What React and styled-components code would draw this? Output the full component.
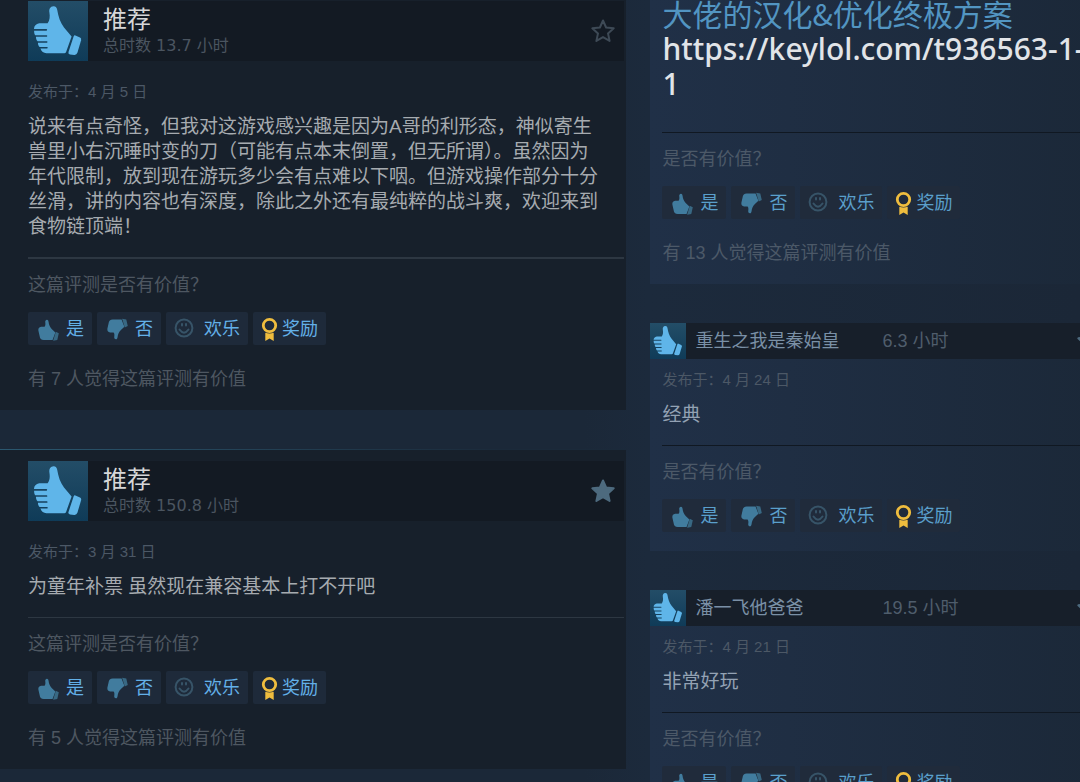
import React from 'react';
import styled, { createGlobalStyle } from 'styled-components';

const GlobalStyle = createGlobalStyle`
  * {
    box-sizing: border-box;
  }
  body {
    margin: 0;
    background: #1b2838;
    overflow: hidden;
    font-family: 'Liberation Sans', 'Noto Sans CJK SC', sans-serif;
  }
  h1, h2, p {
    margin: 0;
    font-weight: 400;
  }
`;

const Page = styled.main`
  display: flex;
  align-items: flex-start;
  gap: 24px;
  height: 100vh;
  overflow: hidden;
  background: linear-gradient(90deg, #1b2838 0%, #1b2838 54%, #1c2a3c 60%, #1b2737 100%);
`;

const MainColumn = styled.div`
  flex: 0 0 58%;
  display: flex;
  flex-direction: column;
  gap: 39px;
`;

const SideColumn = styled.div`
  flex: 1 0 460px;
  display: flex;
  flex-direction: column;
  gap: 39px;
`;

const MainCard = styled.article`
  padding: ${(props) => (props.$scrolled ? '1px' : '11px')} 2px 19px 28px;
  background: #17202b;
  border-top: ${(props) => (props.$scrolled ? '0' : '1px')} solid;
  border-image: linear-gradient(90deg, #2b5870, #1b2a3a 80%) 1;
`;

const MainHeader = styled.header`
  display: flex;
  align-items: center;
  height: 60px;
  padding-right: 9px;
  background: #131a23;
`;

const HeaderText = styled.div`
  flex: 1;
  padding-left: 15px;
`;

const Verdict = styled.h2`
  font-size: 24px;
  line-height: 30px;
  color: #d6d7d8;
`;

const TotalHours = styled.p`
  font-family: 'DejaVu Sans', 'Noto Sans CJK SC', sans-serif;
  font-size: 16px;
  line-height: 22px;
  color: #4b5560;
`;

const ThumbTile = styled.span`
  flex: none;
  display: block;
  width: ${(props) => props.$size}px;
  height: ${(props) => props.$size}px;
  background: linear-gradient(#234d67, #0f3b58);
  color: #5fb5e9;

  svg {
    display: block;
    width: 100%;
    height: 100%;
  }
`;

const StarButton = styled.button`
  display: flex;
  padding: 0;
  border: 0;
  background: none;
  color: ${(props) => (props.$filled ? '#4d6a7e' : '#3e4a56')};
`;

const Posted = styled.p`
  margin-top: ${(props) => (props.$compact ? 11 : 21)}px;
  font-size: 15px;
  line-height: 20px;
  color: #4c5866;
`;

const Body = styled.p`
  margin-top: 12px;
  padding-right: 20px;
  font-size: 19px;
  line-height: 25px;
  color: ${(props) => (props.$side ? '#93a2b4' : '#a6abb0')};
`;

const Divider = styled.hr`
  height: ${(props) => (props.$thick ? 2 : 1)}px;
  margin: 18px 0 14px;
  border: 0;
  background: ${(props) => (props.$side ? '#101822' : '#2d3742')};
`;

const Note = styled.p`
  font-size: 18px;
  line-height: 24px;
  color: ${(props) => (props.$side ? '#4c5968' : '#4e5761')};
`;

const Votes = styled.div`
  display: flex;
  gap: 5px;
  margin: 15px 0 0;

  & + p {
    margin-top: 22px;
  }
`;

const VoteButton = styled.button`
  display: flex;
  align-items: center;
  height: 33px;
  padding: 0 8px;
  border: 0;
  border-radius: 2px;
  background: ${(props) => (props.$side ? '#202b3b' : '#1e2a3a')};
  color: ${(props) => (props.$side ? '#5a9fcb' : '#63b0e8')};
  font-family: inherit;
  font-size: 18px;
  line-height: 24px;

  svg {
    flex: none;
    display: block;
  }
`;

const SideCard = styled.article`
  background: linear-gradient(90deg, #203047 0%, #1f2e43 30%, #1b2838 100%);
`;

const SideHeader = styled.header`
  display: flex;
  align-items: center;
  height: 36px;
  padding-right: 9px;
  background: #171f2a;
  font-size: 18px;
  line-height: 24px;
`;

const Author = styled.a`
  flex: 0 0 196px;
  padding-left: 9px;
  color: #7a90a6;
  text-decoration: none;
`;

const SideHours = styled.span`
  flex: 1;
  color: #4f5d6c;
`;

const SideContent = styled.div`
  padding: 0 12px 19px;
`;

const Headline = styled.h1`
  margin-top: -4px;
  padding: 0 8px 13px 0;
  font-family: 'Noto Sans', 'Noto Sans CJK SC', sans-serif;
  font-size: 30px;
  line-height: 35px;
  color: #e1e4e8;
`;

const HeadlineLink = styled.a`
  display: block;
  color: #5295c2;
  font-family: 'Noto Sans CJK SC', sans-serif;
  text-decoration: none;
`;

const Address = styled.span`
  display: block;
  font-weight: 500;
`;

const Thumb = () => (
  <svg viewBox="0 0 60 60" aria-hidden="true">
    <path
      fill="currentColor"
      d="M25.5 5.2C22.2 5.4 20.8 8 21.4 11.6C22.1 15.8 21.8 19.4 19.6 22.3H11.2C8 22.8 6 25 6 28H18.6Q19.8 28.8 18.6 29.7H6.1C6.1 32 6.5 33.4 7.2 34.2H18.8Q20 35 18.8 35.8H7.9C8 38 8.6 39.4 9.6 40.2H19Q20.2 41 19 41.8H9.9C10 43.8 10.6 45.2 11.6 46H19.2Q20.4 46.8 19.2 47.6H12.4C13.4 50.8 15.6 52.2 18.4 52.2H36.2Q37.6 52.2 38.1 50.9L43.6 35.6L36 26.4C32.2 21.8 30.4 15.6 29.2 8.8C28.8 6.4 27.6 5.1 25.5 5.2Z"
    />
    <path
      fill="currentColor"
      d="M47.4 34.4L52 36.6Q53.6 37.4 53.1 39.2L49.4 51.8Q48.6 54 46.4 53.9L42 53.5Q39.9 53.1 40.5 51L45.6 35.4Q46.2 33.9 47.4 34.4Z"
    />
  </svg>
);

const VoteThumb = ({ down }) => (
  <svg width="30" height="24" viewBox="0 0 30 24" aria-hidden="true">
    <g transform={down ? 'matrix(.43 0 0 -.41 0 24)' : 'matrix(.43 0 0 .42 0 1)'}>
      <path
        fill="#417c9e"
        d="M25.5 4C22.4 4.3 20.8 7 21.6 11C22.1 15.5 22 18.5 20 21H12C7 22 5 25 5.5 30L8.4 43C9 49 12 52.5 18 52.5H38.5L45 34.5L36.5 26C31.8 21.4 30 15.2 29.2 9C28.8 5.8 27.6 3.9 25.5 4Z"
      />
      <path fill="#386883" d="M46 33L53 36.5L49.5 52.5L39.8 54Z" />
    </g>
  </svg>
);

const Smile = () => (
  <svg width="30" height="24" viewBox="0 0 30 24" fill="none" stroke="#375468" aria-hidden="true">
    <circle cx="10" cy="11" r="8.4" strokeWidth="2" />
    <path d="M5.5 12.5Q10 18.8 14.5 12.5" strokeWidth="2" strokeLinecap="round" />
    <path d="M8 7V8.5M12 7V8.5" strokeWidth="2" strokeLinecap="round" />
  </svg>
);

const Award = () => (
  <svg width="21" height="26" viewBox="0 0 21 26" fill="none" aria-hidden="true">
    <circle cx="8.5" cy="9.5" r="6.2" stroke="#efbd3e" strokeWidth="2.8" />
    <path fill="#efbd3e" d="M4.3 16.8Q8.5 18.4 12.7 16.8V25L8.5 22.4L4.3 25Z" />
  </svg>
);

const Star = ({ filled }) => (
  <svg width="24" height="24" viewBox="0 0 24 24" aria-hidden="true">
    <path
      d="M12 1.5L15.1 8.5L22.7 9.3L17 14.4L18.6 21.9L12 18.1L5.4 21.9L7 14.4L1.3 9.3L8.9 8.5Z"
      fill={filled ? 'currentColor' : 'none'}
      stroke="currentColor"
      strokeWidth={2}
      strokeLinejoin="round"
    />
  </svg>
);

const VoteRow = ({ side }) => (
  <Votes>
    <VoteButton type="button" $side={side}>
      <VoteThumb />
      是
    </VoteButton>
    <VoteButton type="button" $side={side}>
      <VoteThumb down />
      否
    </VoteButton>
    <VoteButton type="button" $side={side}>
      <Smile />
      欢乐
    </VoteButton>
    <VoteButton type="button" $side={side}>
      <Award />
      奖励
    </VoteButton>
  </Votes>
);

const MainReview = ({ hours, posted, text, count, starred, scrolled }) => (
  <MainCard $scrolled={scrolled}>
    <MainHeader>
      <ThumbTile $size={60}>
        <Thumb />
      </ThumbTile>
      <HeaderText>
        <Verdict>推荐</Verdict>
        <TotalHours>总时数 {hours} 小时</TotalHours>
      </HeaderText>
      <StarButton type="button" aria-label="收藏" $filled={starred}>
        <Star filled={starred} />
      </StarButton>
    </MainHeader>
    <Posted>发布于：{posted}</Posted>
    <Body>{text}</Body>
    <Divider $thick={scrolled} />
    <Note>这篇评测是否有价值？</Note>
    <VoteRow />
    <Note>有 {count} 人觉得这篇评测有价值</Note>
  </MainCard>
);

const SideReview = ({ author, hours, posted, text }) => (
  <SideCard>
    <SideHeader>
      <ThumbTile $size={36}>
        <Thumb />
      </ThumbTile>
      <Author href="#">{author}</Author>
      <SideHours>{hours} 小时</SideHours>
      <StarButton type="button" aria-label="收藏" $filled>
        <Star filled />
      </StarButton>
    </SideHeader>
    <SideContent>
      <Posted $compact>发布于：{posted}</Posted>
      <Body $side>{text}</Body>
      <Divider $side />
      <Note $side>是否有价值？</Note>
      <VoteRow side />
    </SideContent>
  </SideCard>
);

const App = () => {
  return (
    <>
      <GlobalStyle />
      <Page>
        <MainColumn>
          <MainReview
            scrolled
            hours="13.7"
            posted="4 月 5 日"
            text="说来有点奇怪，但我对这游戏感兴趣是因为A哥的利形态，神似寄生兽里小右沉睡时变的刀（可能有点本末倒置，但无所谓）。虽然因为年代限制，放到现在游玩多少会有点难以下咽。但游戏操作部分十分丝滑，讲的内容也有深度，除此之外还有最纯粹的战斗爽，欢迎来到食物链顶端！"
            count={7}
          />
          <MainReview
            starred
            hours="150.8"
            posted="3 月 31 日"
            text="为童年补票 虽然现在兼容基本上打不开吧"
            count={5}
          />
        </MainColumn>
        <SideColumn>
          <SideCard>
            <SideContent>
              <Headline>
                <HeadlineLink href="#">大佬的汉化&amp;优化终极方案</HeadlineLink>
                <Address>https://keylol.com/t936563-1-1</Address>
              </Headline>
              <Divider $side />
              <Note $side>是否有价值？</Note>
              <VoteRow side />
              <Note $side>有 13 人觉得这篇评测有价值</Note>
            </SideContent>
          </SideCard>
          <SideReview author="重生之我是秦始皇" hours="6.3" posted="4 月 24 日" text="经典" />
          <SideReview author="潘一飞他爸爸" hours="19.5" posted="4 月 21 日" text="非常好玩" />
        </SideColumn>
      </Page>
    </>
  );
};

export default App;
